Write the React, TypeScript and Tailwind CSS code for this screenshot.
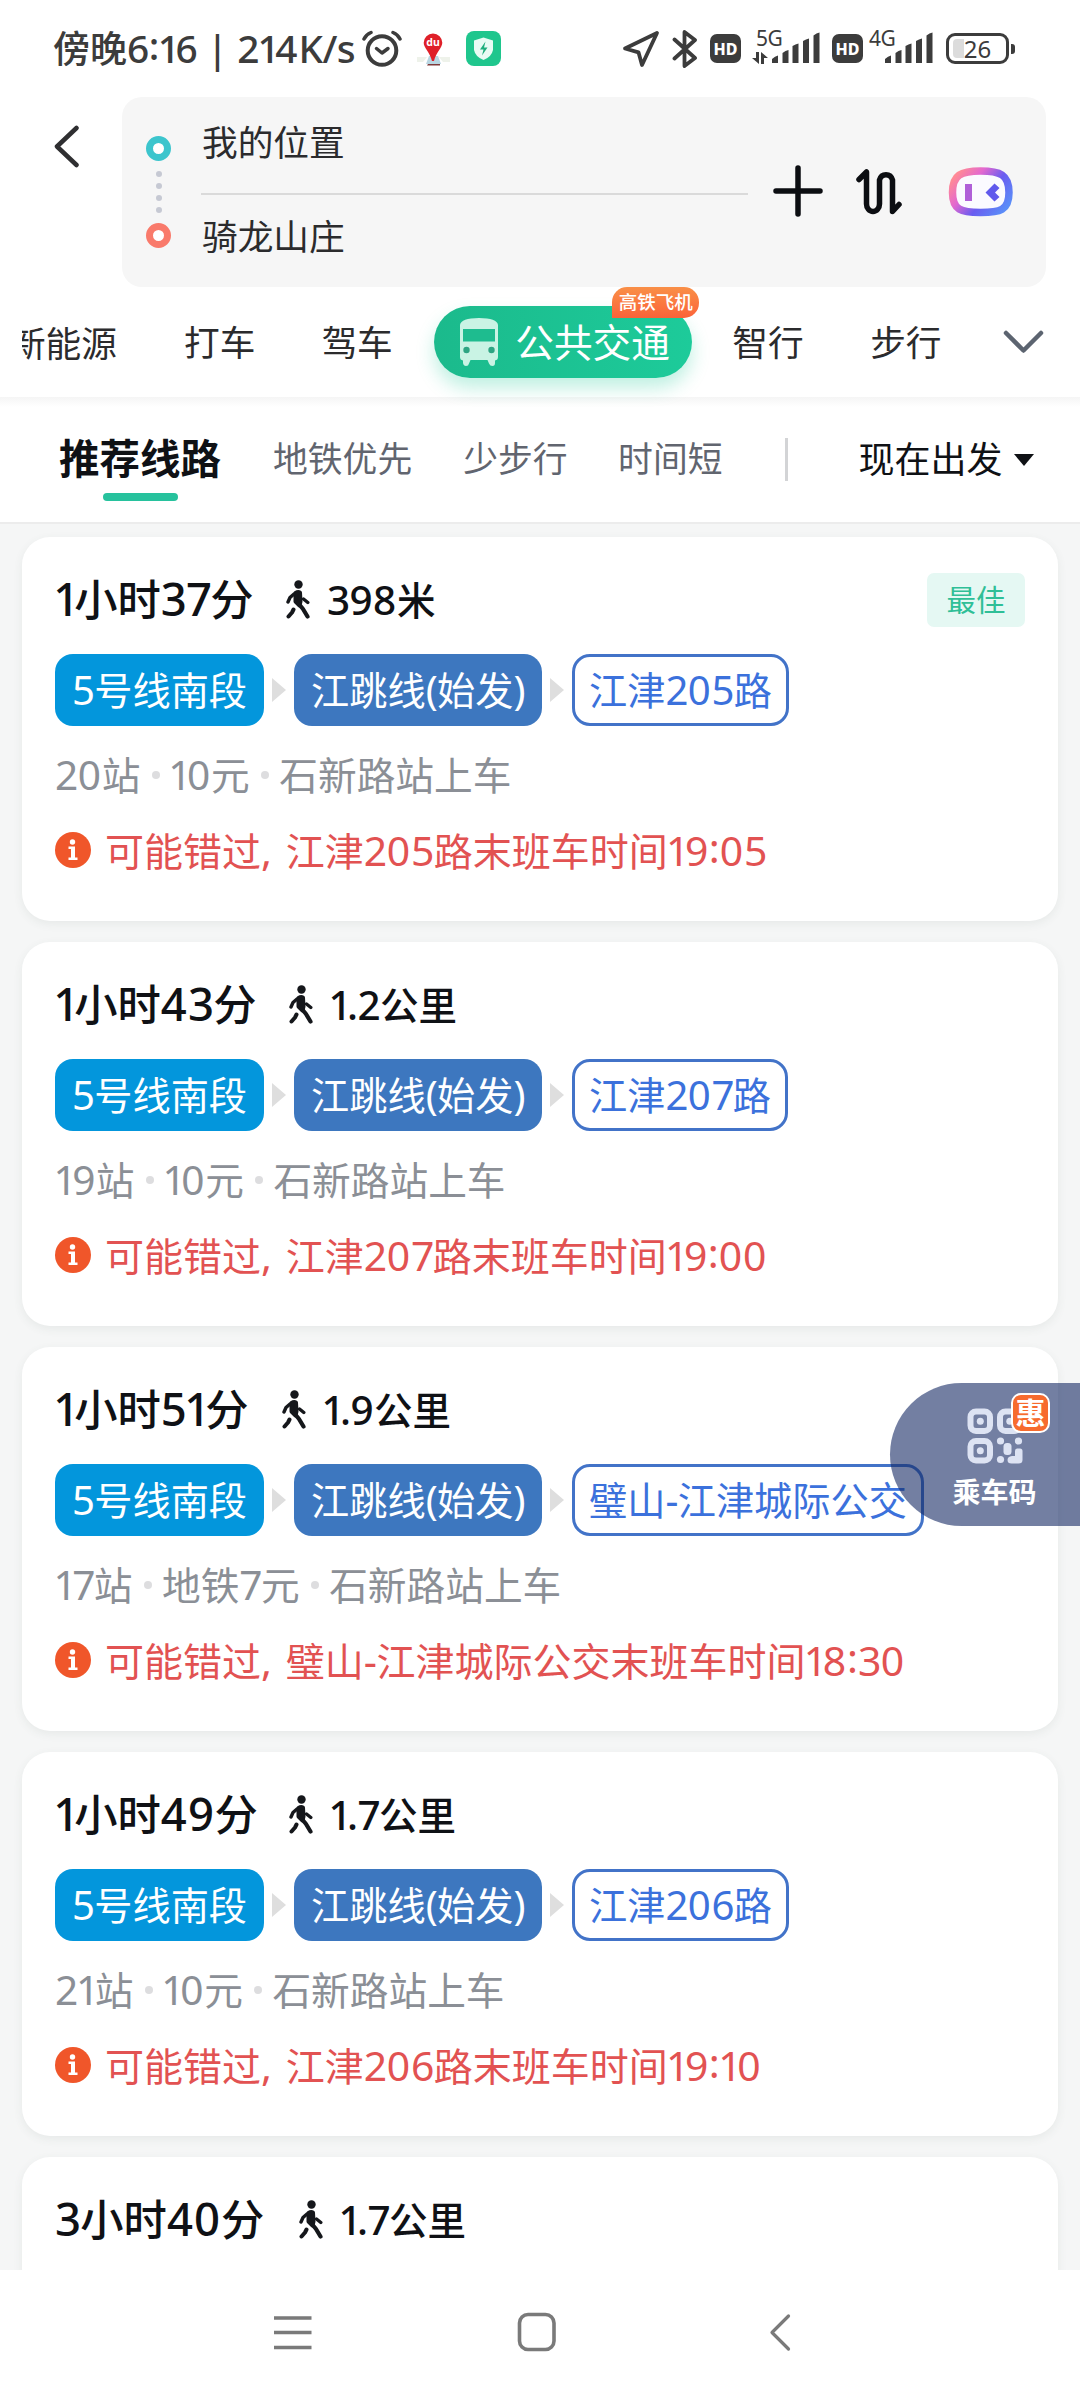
import React from "react";

const runs = (s: string) => s.match(/[\x21-\x7e]|[^\x21-\x7e]+/g) ?? [];

/** Side bearings and shifts of single Latin characters. */
const glyph: Record<string, string> = {
  "1": "-ml-[0.040em] tracking-[-0.110em]",
  "0": "tracking-[0.020em]",
  "4": "tracking-[0.025em]",
  "7": "tracking-[-0.040em]",
  "8": "tracking-[0.020em]",
  "9": "tracking-[0.010em]",
  ":": "align-[0.070em] tracking-[0em]",
  ",": "tracking-[0.090em]",
};

/** Mixed text: Latin characters are set slightly larger than the Chinese ones. */
function Txt({ children, className = "" }: { children: string; className?: string }) {
  return (
    <span className={`whitespace-pre leading-none ${className}`}>
      {runs(children).map((r, i) =>
        /[\x21-\x7e]/.test(r) ? (
          <span key={i} className={`text-[1.05em] leading-[0] ${glyph[r] ?? "tracking-[-0.015em]"}`}>
            {r}
          </span>
        ) : (
          <span key={i}>{r}</span>
        )
      )}
    </span>
  );
}

function Signal() {
  return (
    <svg width="48" height="32" viewBox="0 0 48 32" fill="#3c3c3c">
      <path d="M0 31v-4q3-3 6-3.500v7.500zM10.500 31V21q3-2.500 6-3v13zM20.500 31V14q3-2 6-2.500V31zM31 31V9q3-2 6-2.500V31zM41.500 31V3.500Q44.500 1 47.500.5V31z" />
    </svg>
  );
}

function Hd() {
  return (
    <span className="flex h-[29px] w-[31px] items-center justify-center rounded-[7px] bg-[#3c3c3c] font-['Noto_Sans'] text-[16px] leading-none font-extrabold text-white">
      HD
    </span>
  );
}

function StatusBar() {
  return (
    <div className="flex h-[97px] shrink-0 items-center pl-[53px] text-[#3c3c3c]">
      <Txt className="w-[308px] text-[37px] font-medium">傍晚6:16 | 214K/s</Txt>
      <svg className="ml-px" width="40" height="38" viewBox="0 0 40 38" fill="none" stroke="#3c3c3c" strokeLinecap="round" strokeLinejoin="round">
        <circle cx="20" cy="20.500" r="14.300" strokeWidth="4" />
        <path d="M14.500 18.500l5.500 4.500 6-4.500" strokeWidth="3.500" />
        <path d="M2 9Q4 4.500 9 2.500M38 9Q36 4.500 31 2.500" strokeWidth="3.500" />
      </svg>
      <svg className="ml-[15px]" width="33" height="36" viewBox="0 0 33 36">
        <path d="M0 26h10l-4 5H0zM33 26H22l4 5h7z" fill="#eef2ea" />
        <path d="M12 25h9l3 8H9z" fill="#b9d6e2" />
        <path d="M11 33h12v1.500H10z" fill="#7f3a3a" />
        <path d="M16 2.500a9.300 9.300 0 0 1 9.300 9.300c0 5-6.300 9.500-8.300 18.200h-2C13 21.300 6.700 17 6.700 11.800A9.300 9.300 0 0 1 16 2.500z" fill="#df2029" />
        <text x="16" y="15" textAnchor="middle" fontSize="10.500" fontWeight="700" fontFamily="Noto Sans" fill="#fff">du</text>
      </svg>
      <svg className="ml-4" width="35" height="35" viewBox="0 0 35 35">
        <rect width="35" height="35" rx="8" fill="#1fc68d" />
        <path d="M17.500 6.500l9.500 3v9.500q-1.500 7-9.500 10-8-3-9.500-10V9.500z" fill="#e9fbf4" />
        <path d="M19.500 10.500l-5.500 8h3.500l-1.500 6 5.500-8H18z" fill="#1fae7d" />
      </svg>
      <svg className="ml-[121px]" width="38" height="38" viewBox="0 0 38 38" fill="none" stroke="#3c3c3c" strokeWidth="3.800" strokeLinejoin="round">
        <path d="M35 3L3 18.500l13.500 3.800L20 35z" />
      </svg>
      <svg className="ml-3" width="26" height="40" viewBox="0 0 26 40" fill="none" stroke="#3c3c3c" strokeWidth="3.800" strokeLinejoin="round" strokeLinecap="round">
        <path d="M2.500 10.500L23 29 12.500 37V3L23 11 2.500 29.500" />
      </svg>
      <div className="ml-3">
        <Hd />
      </div>
      <div className="relative ml-[31px] h-[34px]">
        <Signal />
        <span className="absolute -top-[4px] -left-[16px] font-['Noto_Sans'] text-[21px] leading-none tracking-[-0.5px]">5G</span>
        <svg className="absolute top-[19px] -left-[20px]" width="17" height="14" viewBox="0 0 17 14" fill="#3c3c3c">
          <path d="M0 7h4V1h3v12zM9 1l7 6h-4v6H9z" />
        </svg>
      </div>
      <div className="ml-3">
        <Hd />
      </div>
      <div className="relative ml-[22px] h-[34px]">
        <Signal />
        <span className="absolute -top-[4px] -left-[16px] font-['Noto_Sans'] text-[21px] leading-none tracking-[-0.5px]">4G</span>
      </div>
      <div className="relative ml-[13px] flex h-[31px] w-[63px] items-center justify-center rounded-[9px] border-[3px] border-[#3c3c3c]">
        <span className="absolute top-[3px] left-[4px] h-[19px] w-[11px] rounded-l-[4px] bg-[#dcdcdc]" />
        <span className="relative font-['Noto_Sans'] text-[24px] leading-none">26</span>
      </div>
      <span className="ml-[2px] h-[10px] w-[4px] rounded-r-[3px] bg-[#3c3c3c]" />
    </div>
  );
}

function Ring({ className }: { className: string }) {
  return <span className={`h-[25px] w-[25px] rounded-full border-[7.5px] bg-white ${className}`} />;
}

function SearchBox() {
  return (
    <div className="flex h-[190px] shrink-0 pl-[54px]">
      <svg className="mt-[28px]" width="26" height="43" viewBox="0 0 26 43" fill="none" stroke="#2f2f31" strokeWidth="4.500" strokeLinecap="round" strokeLinejoin="round">
        <path d="M22.500 3L3 21.500l19.500 18.500" />
      </svg>
      <div className="ml-[42px] flex h-[190px] w-[924px] items-start rounded-[20px] bg-[#f6f6f6]">
        <div className="mt-[38.500px] ml-[24px] flex w-[25px] flex-col items-center">
          <Ring className="border-[#3cc5cd]" />
          <div className="my-[10px] flex flex-col gap-[6.300px]">
            {[0, 1, 2, 3].map((i) => (
              <span key={i} className="h-[6px] w-[6px] rounded-full bg-[#c6c9d3]" />
            ))}
          </div>
          <Ring className="border-[#f97a6b]" />
        </div>
        <div className="ml-[30px] flex w-[547px] flex-col text-[35.700px] text-[#2b2b2d]">
          <div className="flex h-[96px] items-center pb-[4px] pl-[1px]">
            <Txt>我的位置</Txt>
          </div>
          <div className="h-[1.500px] bg-[#dadada]" />
          <div className="flex h-[86px] items-center pb-[2px] pl-[1px]">
            <Txt>骑龙山庄</Txt>
          </div>
        </div>
        <svg className="mt-[68px] ml-[25px]" width="50" height="52" viewBox="0 0 50 52" fill="none" stroke="#0c0e12" strokeWidth="5.500" strokeLinecap="round">
          <path d="M25 3v46M3 26h44" />
        </svg>
        <svg className="mt-[71px] ml-[33px]" width="46" height="48" viewBox="0 0 46 48" fill="none" stroke="#0c0e12" strokeWidth="5.500" strokeLinecap="round" strokeLinejoin="round">
          <path d="M3 11.500L10.500 4V36a6.500 7.500 0 0 0 13 0V12a6.800 7.500 0 0 1 13 0v31.500l6.500-7" />
        </svg>
        <svg className="mt-[69px] ml-[45px]" width="66" height="52" viewBox="0 0 66 52">
          <defs>
            <linearGradient id="ai" x1="0" y1="0.200" x2="1" y2="0.800">
              <stop offset="0" stopColor="#ff8a96" />
              <stop offset="0.300" stopColor="#e368cf" />
              <stop offset="0.620" stopColor="#6a5cf0" />
              <stop offset="1" stopColor="#5b8cf8" />
            </linearGradient>
          </defs>
          <path d="M33.500 5C53 5 62 8.500 62 26.500S53 46.500 33.500 46.500 5.500 44 5.500 26.500 14 5 33.500 5z" fill="#fbfaff" stroke="url(#ai)" strokeWidth="7.500" />
          <rect x="18" y="18" width="7" height="17" fill="#b05fd8" />
          <path d="M38.500 26.500l9-9 5 4.500-4.500 4.500 4.500 4.500-5 4.500z" fill="#6059ec" />
        </svg>
      </div>
    </div>
  );
}

function ModeTabs() {
  return (
    <div className="flex h-[110px] shrink-0 items-start pt-[19px] text-[35.700px] text-[#2b2b2d]">
      <div className="flex h-[72px] w-full items-center pl-[22px]">
        <div className="flex w-[95px] justify-end overflow-hidden">
          <Txt className="pt-2 pb-1">新能源</Txt>
        </div>
        <Txt className="ml-[67px] pt-[2px]">打车</Txt>
        <Txt className="ml-[66px] pt-[2px]">驾车</Txt>
        <div className="relative ml-[41.500px] flex h-[72px] w-[258px] items-center rounded-full bg-linear-to-r from-[#1bba8c] to-[#1dcb9a] pl-[24px] text-white shadow-[0_10px_18px_rgba(29,200,150,0.28)]">
          <svg width="42" height="50" viewBox="0 0 42 50">
            <path d="M2 8Q3 1 21 1t19 7v32q0 3-3 3.500V46q0 3-2.500 3T31 46.500L29.500 43h-17L11 46.500Q10.500 49 8 49t-3-3v-2.500Q2 43 2 40z" fill="#c9f3e4" />
            <rect x="5" y="12" width="32" height="12.500" fill="#1ebc8f" />
            <circle cx="8.500" cy="33" r="3.200" fill="#2ea583" />
            <circle cx="33.500" cy="33" r="3.200" fill="#2ea583" />
          </svg>
          <Txt className="ml-[15px] text-[38.700px]">公共交通</Txt>
          <span className="absolute -top-[19px] left-[178px] flex h-[31px] w-[87px] items-center justify-center rounded-[15px] rounded-bl-none bg-linear-to-b from-[#f98f47] to-[#fb6239] text-[18.500px] leading-none font-medium">
            高铁飞机
          </span>
        </div>
        <Txt className="ml-[40px] pt-[2px]">智行</Txt>
        <Txt className="ml-[66.500px] pt-[2px]">步行</Txt>
        <svg className="ml-[61px]" width="41" height="24" viewBox="0 0 41 24" fill="none" stroke="#5c6470" strokeWidth="4.500" strokeLinecap="round" strokeLinejoin="round">
          <path d="M3 3l17.500 17.500L38 3" />
        </svg>
      </div>
    </div>
  );
}

function FilterTabs() {
  return (
    <div className="flex h-[127px] shrink-0 items-start border-b-2 border-[#ececec] bg-linear-to-b from-[#f5f5f5] to-white to-8% pl-[58px] text-[34.800px] text-[#61656f]">
      <div className="flex w-[164px] flex-col items-center">
        <div className="flex h-[96px] items-center pt-[29px]">
          <Txt className="text-[40.500px] font-semibold text-[#0f1115]">推荐线路</Txt>
        </div>
        <span className="h-[8px] w-[75px] rounded-full bg-[#27c29d]" />
      </div>
      <div className="flex h-[96px] items-center pt-[29px]">
        <Txt className="ml-[51px]">地铁优先</Txt>
        <Txt className="ml-[51px]">少步行</Txt>
        <Txt className="ml-[50.500px]">时间短</Txt>
        <span className="ml-[62px] h-[43px] w-[3px] bg-[#d3d4d6]" />
        <Txt className="ml-[71px] text-[36px] text-[#0f1115]">现在出发</Txt>
        <span className="ml-[11px] border-x-[10.5px] border-t-[12px] border-x-transparent border-t-[#0f1115]" />
      </div>
    </div>
  );
}

function Walker() {
  return (
    <svg width="24" height="40" viewBox="0 0 24 40" fill="none" stroke="#15171b" strokeLinecap="round" strokeLinejoin="round">
      <circle cx="12.500" cy="4.500" r="4.200" fill="#15171b" stroke="none" />
      <path d="M9.500 13q2.500-1.500 4.500-.5l.5 9-1 4-4-4z" fill="#15171b" strokeWidth="4" />
      <path d="M8 14l-4 3.500-2 4.500" strokeWidth="3.400" />
      <path d="M17.500 19l4.300 3.500" strokeWidth="3.400" />
      <path d="M12.500 23.500l4.500 5.500 4.500 7.500" strokeWidth="4.200" />
      <path d="M7.500 29.500l-1.500 3-3.500 4" strokeWidth="4" />
    </svg>
  );
}

type Route = {
  time: string;
  walk: string;
  bus?: string;
  info?: string[];
  warn?: string;
  best?: boolean;
  timeW: string;
};

const routes: Route[] = [
  { time: "1小时37分", walk: "398米", bus: "江津205路", info: ["20站", "10元", "石新路站上车"], warn: "可能错过, 江津205路末班车时间19:05", best: true, timeW: "w-[231px]" },
  { time: "1小时43分", walk: "1.2公里", bus: "江津207路", info: ["19站", "10元", "石新路站上车"], warn: "可能错过, 江津207路末班车时间19:00", timeW: "w-[234px]" },
  { time: "1小时51分", walk: "1.9公里", bus: "璧山-江津城际公交", info: ["17站", "地铁7元", "石新路站上车"], warn: "可能错过, 璧山-江津城际公交末班车时间18:30", timeW: "w-[227px]" },
  { time: "1小时49分", walk: "1.7公里", bus: "江津206路", info: ["21站", "10元", "石新路站上车"], warn: "可能错过, 江津206路末班车时间19:10", timeW: "w-[234px]" },
  { time: "3小时40分", walk: "1.7公里", timeW: "w-[244px]" },
];

function Step() {
  return <span className="mx-[8px] border-y-[12.5px] border-l-[14px] border-y-transparent border-l-[#dedede]" />;
}

function RouteCard({ r }: { r: Route }) {
  return (
    <div className="h-[384px] shrink-0 rounded-[28px] bg-white px-[33px] pt-[36px] shadow-[0_3px_10px_rgba(60,90,80,0.08)]">
      <div className="flex h-[54px] items-center">
        <Txt className={`text-[43.300px] font-medium text-[#0f1115] ${r.timeW}`}>{r.time}</Txt>
        <Walker />
        <Txt className="ml-[17px] text-[38.500px] font-medium text-[#0f1115]">{r.walk}</Txt>
        {r.best && (
          <span className="ml-auto flex h-[54px] w-[98px] items-center justify-center rounded-[7px] bg-[#e5f8f3] text-[29.500px] leading-none text-[#2fbf97]">
            最佳
          </span>
        )}
      </div>
      {r.bus && r.info && r.warn && (
        <>
          <div className="mt-[27px] flex h-[72px] items-center text-[38.200px]">
            <span className="flex h-full w-[209px] items-center justify-center rounded-[18px] bg-[#0396dc] text-white">
              <Txt>5号线南段</Txt>
            </span>
            <Step />
            <span className="flex h-full w-[248px] items-center justify-center rounded-[18px] bg-[#3d77bf] text-white">
              <Txt>江跳线(始发)</Txt>
            </span>
            <Step />
            <span className="flex h-full items-center justify-center rounded-[18px] border-[3px] border-[#4273c8] px-[14px] text-[#3b71dc]">
              <Txt>{r.bus}</Txt>
            </span>
          </div>
          <div className="mt-[24px] flex h-[50px] items-center text-[38.700px] text-[#8b8f96]">
            {r.info.map((t, i) => (
              <React.Fragment key={t}>
                {i > 0 && <span className="mr-[10px] ml-[11.500px] h-[8px] w-[8px] rounded-full bg-[#dddddf]" />}
                <Txt>{t}</Txt>
              </React.Fragment>
            ))}
          </div>
          <div className="mt-[25px] flex h-[50px] items-center text-[39px] text-[#e25252]">
            <svg width="36" height="36" viewBox="0 0 36 36">
              <circle cx="18" cy="18" r="18" fill="#f0562a" />
              <circle cx="17.500" cy="10" r="2.700" fill="#fff" />
              <path d="M13.500 14.500h6.500v11h2.500v2.500h-9v-2.500h2.500v-8.500h-2.500z" fill="#fff" />
            </svg>
            <Txt className="ml-[14px]">{r.warn}</Txt>
          </div>
        </>
      )}
    </div>
  );
}

function RideCode() {
  return (
    <div className="absolute top-[1383px] right-0 flex h-[143px] w-[190px] flex-col items-center rounded-l-full bg-[#152964]/60 pt-[25px] pl-[19px]">
      <svg width="56" height="56" viewBox="0 0 56 56" fill="none" stroke="#dde3f3" strokeWidth="6">
        <rect x="3.500" y="3.500" width="19.500" height="19.500" rx="5.500" />
        <rect x="33" y="3.500" width="19.500" height="19.500" rx="5.500" />
        <rect x="3.500" y="33" width="19.500" height="19.500" rx="5.500" />
        <g fill="#dde3f3" stroke="none">
          <circle cx="13.300" cy="13.300" r="3.500" />
          <circle cx="42.800" cy="13.300" r="3.500" />
          <circle cx="13.300" cy="42.800" r="3.500" />
          <circle cx="33.500" cy="33" r="3.600" />
          <circle cx="51.500" cy="33" r="3.600" />
          <circle cx="33.500" cy="51.500" r="3.600" />
          <rect x="36.500" y="35" width="8" height="12" rx="3.500" />
          <path d="M48 43q0-2.500 2-2.500h3q2.500 0 2.500 2.500v9q0 3.500-4 3.500h-7q-4 0-4-3.500t4.500-4h3z" />
        </g>
      </svg>
      <Txt className="mt-[14px] text-[28px] font-bold text-white">乘车码</Txt>
      <span className="absolute top-[10px] left-[121px] flex h-[40px] w-[39px] items-center justify-center rounded-[10px] border-2 border-white bg-[#f76b2e] text-[30px] leading-none font-bold text-white">
        惠
      </span>
    </div>
  );
}

function NavBar() {
  return (
    <div className="flex h-[130px] shrink-0 items-start bg-white pt-[42px] pl-[274px]">
      <svg width="38" height="40" viewBox="0 0 38 40" stroke="#7a7a7a" strokeWidth="3.500">
        <path d="M0 6h37.500M0 20.500h37.500M0 35.500h37.500" />
      </svg>
      <svg className="ml-[205px]" width="40" height="40" viewBox="0 0 40 40" fill="none" stroke="#7a7a7a" strokeWidth="3.600">
        <rect x="2.500" y="2.500" width="34.500" height="35" rx="8.500" />
      </svg>
      <svg className="ml-[212px]" width="22" height="40" viewBox="0 0 22 40" fill="none" stroke="#7a7a7a" strokeWidth="3.200" strokeLinecap="round" strokeLinejoin="round">
        <path d="M19.500 4L3 20.500l16.500 16.500" />
      </svg>
    </div>
  );
}

export default function App() {
  return (
    <div className="relative flex h-[2400px] w-[1080px] flex-col overflow-hidden bg-white font-['Noto_Sans','Noto_Sans_CJK_SC',sans-serif]">
      <StatusBar />
      <SearchBox />
      <ModeTabs />
      <FilterTabs />
      <div className="flex h-[1746px] shrink-0 flex-col gap-[21px] overflow-hidden bg-[#f5f6f6] px-[22px] pt-[13px]">
        {routes.map((r) => (
          <RouteCard key={r.time} r={r} />
        ))}
      </div>
      <NavBar />
      <RideCode />
    </div>
  );
}
